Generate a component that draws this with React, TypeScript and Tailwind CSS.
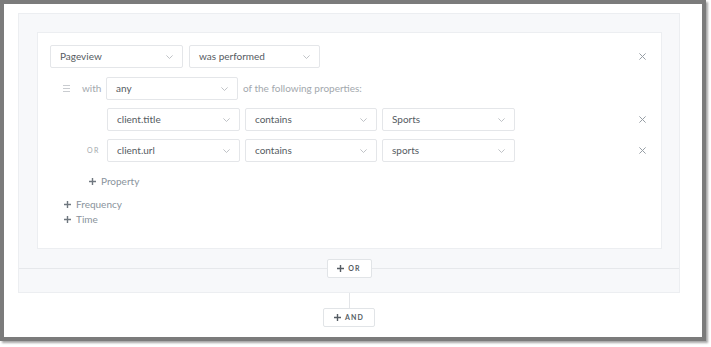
import React from 'react';

const Chevron = () => (
  <svg width="7" height="4" viewBox="0 0 7 4" fill="none" stroke="#b0b4b9" strokeWidth="0.8">
    <path d="M0.4 0.4 L3.5 3.5 L6.6 0.4" />
  </svg>
);

const Close = () => (
  <svg width="7" height="7" viewBox="0 0 7 7" fill="none" stroke="#979ea5" strokeWidth="1">
    <path d="M0.4 0.4 L6.6 6.6 M6.6 0.4 L0.4 6.6" />
  </svg>
);

const Plus = ({ size = 7 }: { size?: number }) => (
  <svg width={size} height={size} viewBox="0 0 8 8" fill="none" stroke="currentColor" strokeWidth="1.6">
    <path d="M4 0 V8 M0 4 H8" />
  </svg>
);

const Select = ({ value, w }: { value: string; w: string }) => (
  <div
    className={`${w} h-[23px] shrink-0 flex items-center justify-between pl-[9px] pr-[9px] bg-white border border-[#e4e6e9] rounded-[2px] text-[10px] text-[#555b62]`}
  >
    <span>{value}</span>
    <Chevron />
  </div>
);

const Row = ({ children }: { children: React.ReactNode }) => (
  <div className="flex items-center">{children}</div>
);

const App: React.FC = () => {
  return (
    <div className="w-[711px] h-[347px] bg-white" style={{ fontFamily: 'Lato, "Open Sans", sans-serif' }}>
      <div className="w-[706px] h-[341px] border-4 border-[#7b7b7b] shadow-[2px_2px_2px_rgba(0,0,0,0.35)] pl-[14px] pt-[9px]">
        {/* segment panel */}
        <div className="w-[662px] h-[280px] border border-[#eceef1] bg-[#f7f8fa] flex flex-col">
          <div className="pt-[18px] px-[18px]">
            {/* white card */}
            <div className="w-[625px] h-[217px] bg-white border border-[#eceef1] pl-[12px] pt-[12px] pr-[15px]">
              <Row>
                <Select value="Pageview" w="w-[133px]" />
                <div className="w-[6px]" />
                <Select value="was performed" w="w-[131px]" />
                <div className="flex-1" />
                <Close />
              </Row>

              <div className="mt-[9px] flex items-center">
                <div className="w-[19px] ml-[13px] flex flex-col gap-[2px]">
                  <div className="h-px w-[7px] bg-[#c9ccd0]" />
                  <div className="h-px w-[7px] bg-[#c9ccd0]" />
                  <div className="h-px w-[7px] bg-[#c9ccd0]" />
                </div>
                <span className="text-[10px] text-[#a3a8ad] w-[24px]">with</span>
                <Select value="any" w="w-[132px]" />
                <span className="ml-[5px] text-[10px] text-[#a3a8ad]">of the following properties:</span>
              </div>

              <div className="mt-[8px] flex flex-col gap-[8px]">
                <Row>
                  <div className="w-[57px]" />
                  <Select value="client.title" w="w-[133px]" />
                  <div className="w-[5px]" />
                  <Select value="contains" w="w-[132px]" />
                  <div className="w-[5px]" />
                  <Select value="Sports" w="w-[133px]" />
                  <div className="flex-1" />
                  <Close />
                </Row>
                <Row>
                  <span className="w-[57px] pl-[37px] text-[7px] tracking-[1.5px] text-[#a3a8ad]">OR</span>
                  <Select value="client.url" w="w-[133px]" />
                  <div className="w-[5px]" />
                  <Select value="contains" w="w-[132px]" />
                  <div className="w-[5px]" />
                  <Select value="sports" w="w-[133px]" />
                  <div className="flex-1" />
                  <Close />
                </Row>
              </div>

              <div className="mt-[12px] ml-[39px] flex items-center gap-[5px] text-[10px] leading-[15px] text-[#8a939c]">
                <span className="text-[#6f777f]"><Plus /></span>
                <span>Property</span>
              </div>

              <div className="mt-[8px] ml-[14px] flex flex-col text-[10px] leading-[15px] text-[#8a939c]">
                <div className="flex items-center gap-[5px]">
                  <span className="text-[#6f777f]"><Plus /></span>
                  <span>Frequency</span>
                </div>
                <div className="flex items-center gap-[5px]">
                  <span className="text-[#6f777f]"><Plus /></span>
                  <span>Time</span>
                </div>
              </div>
            </div>
          </div>

          {/* OR divider */}
          <div className="mt-[10px] flex items-center">
            <div className="flex-1 h-px bg-[#e6e8eb]" />
            <button className="w-[45px] h-[19px] bg-white border border-[#e1e4e7] rounded-[2px] flex items-center justify-center gap-[4px] text-[#555c63]">
              <Plus size={7} />
              <span className="text-[7px] font-bold tracking-[1.2px]">OR</span>
            </button>
            <div className="flex-1 h-px bg-[#e6e8eb]" />
          </div>
        </div>

        {/* AND connector */}
        <div className="w-[662px] flex flex-col items-center">
          <div className="w-px h-[15px] bg-[#e3e5e8]" />
          <button className="w-[52px] h-[19px] bg-white border border-[#e1e4e7] rounded-[2px] flex items-center justify-center gap-[4px] text-[#555c63]">
            <Plus size={7} />
            <span className="text-[7px] font-bold tracking-[1.2px]">AND</span>
          </button>
        </div>
      </div>
    </div>
  );
};

export default App;
